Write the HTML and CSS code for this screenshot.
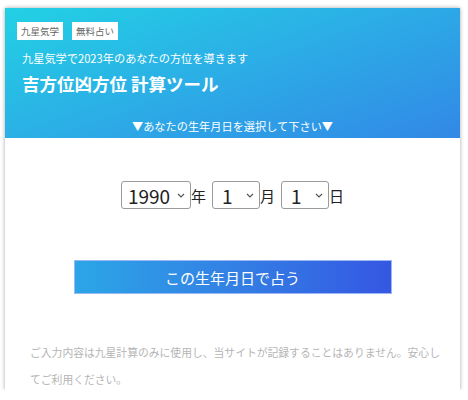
FILE: index.html
```html
<!DOCTYPE html>
<html lang="ja">

<head>
    <meta charset="UTF-8">
    <meta name="viewport" content="width=device-width, initial-scale=1.0">
    <title>吉方位凶方位 計算ツール</title>
    <link rel="stylesheet" href="styles.css">
</head>

<body>
    <div class="card">
        <div class="card-head">
            <div class="tags">
                <span class="tag">九星気学</span>
                <span class="tag">無料占い</span>
            </div>
            <p class="lead">九星気学で2023年のあなたの方位を導きます</p>
            <h1 class="title">吉方位凶方位 計算ツール</h1>
            <p class="prompt">▼あなたの生年月日を選択して下さい▼</p>
        </div>
        <div class="card-body">
            <div class="date-row">
                <select class="date-select year">
                    <option>1990</option>
                </select>
                <span class="unit">年</span>
                <select class="date-select">
                    <option>1</option>
                </select>
                <span class="unit">月</span>
                <select class="date-select">
                    <option>1</option>
                </select>
                <span class="unit">日</span>
            </div>
            <button class="submit">この生年月日で占う</button>
            <p class="note">ご入力内容は九星計算のみに使用し、当サイトが記録することはありません。安心してご利用ください。</p>
        </div>
    </div>
</body>

</html>
```

FILE: styles.css
```css
body {
    margin: 0;
    background-color: #fff;
    font-family: "Noto Sans CJK JP", "Noto Sans", sans-serif;
    color: #222;
}

.card {
    width: 455px;
    height: 382px;
    margin: 8px 0 0 5px;
    background-color: #fff;
    box-shadow: 0 0 4px rgba(0, 0, 0, 0.35);
    overflow: hidden;
}

.card-head {
    height: 130px;
    box-sizing: border-box;
    padding: 14px 17px 0;
    background: linear-gradient(160deg, #22d1e4 0%, #2bb0e6 45%, #3288e6 100%);
    color: #fff;
}

.tags {
    display: flex;
    gap: 9px;
    margin-left: -5px;
}

.tag {
    background-color: #fff;
    color: #666;
    font-size: 9.5px;
    line-height: 18px;
    padding: 0 4px;
}

.lead {
    margin: 9px 0 0;
    font-size: 11.2px;
    line-height: 18px;
}

.title {
    margin: 5px 0 0;
    font-size: 17.5px;
    line-height: 24px;
    font-weight: bold;
}

.prompt {
    margin: 22px 0 0;
    text-align: center;
    font-size: 11.2px;
    line-height: 16px;
}

.card-body {
    padding: 43px 25px 0;
}

.date-row {
    display: flex;
    justify-content: center;
    align-items: center;
}

.date-select {
    appearance: none;
    -webkit-appearance: none;
    width: 48px;
    height: 28px;
    padding: 0 0 0 9px;
    border: 1px solid #9a9a9a;
    border-radius: 3px;
    background: #fff url("data:image/svg+xml,%3Csvg xmlns='http://www.w3.org/2000/svg' width='8' height='5'%3E%3Cpath d='M1 1l3 3 3-3' fill='none' stroke='%23555' stroke-width='1.2'/%3E%3C/svg%3E") no-repeat right 5px center;
    font-family: "Noto Sans CJK JP", sans-serif;
    font-size: 19px;
    color: #222;
}

.date-select.year {
    width: 70px;
    padding-left: 6px;
}

.unit {
    font-size: 15px;
    margin-right: 6px;
}

.unit:last-child {
    margin-right: 0;
}

.submit {
    display: block;
    width: 318px;
    height: 34px;
    margin: 51px auto 0;
    border: 1px solid #9bb8f5;
    background: linear-gradient(90deg, #2ba6e7 0%, #3380e4 50%, #3557e3 100%);
    color: #fff;
    font-family: "Noto Sans CJK JP", sans-serif;
    font-size: 15px;
    cursor: pointer;
}

.note {
    margin: 45px -6px 0 0;
    font-size: 10.8px;
    line-height: 27px;
    color: #b5b5b5;
}
```
